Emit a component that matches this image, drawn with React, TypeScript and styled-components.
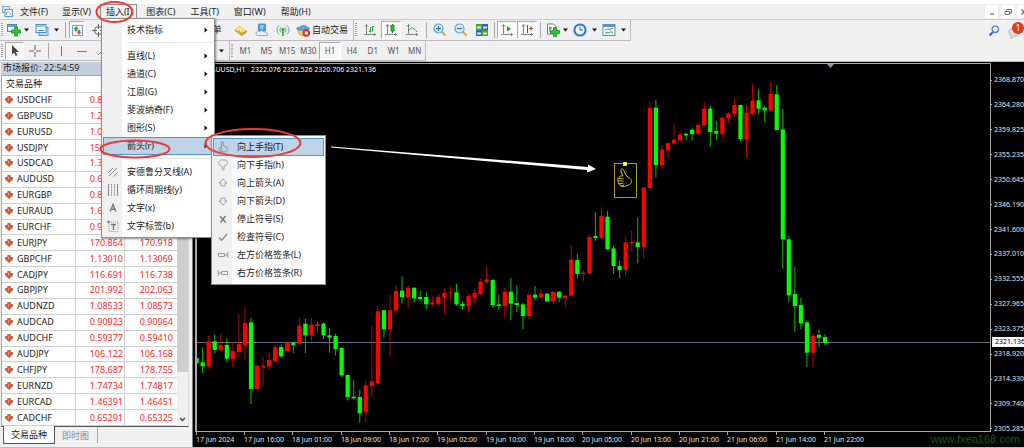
import React from "react";
import styled, { createGlobalStyle, css } from "styled-components";

const GlobalStyle = createGlobalStyle`
  * { box-sizing: border-box; }
  body {
    margin: 0;
    background: #f0f0f0;
    font-family: "Noto Sans", "Noto Sans CJK SC", sans-serif;
    font-size: 9px;
    line-height: 12px;
    color: #222;
  }
  button { font: inherit; color: inherit; border: 0; padding: 0; background: none; }
  svg { display: block; flex: none; }
`;

const Window = styled.div`
  position: relative;
  display: flex;
  flex-direction: column;
  height: 100vh;
  overflow: hidden;
  padding-top: 4px;
  background: linear-gradient(#fff 4px, #f0f0f0 4px);
`;

/* ---------- menu bar ---------- */

const MenuBar = styled.nav`
  display: flex;
  align-items: stretch;
  height: 16px;
  padding-left: 2px;
  border-bottom: 1px solid #c9c9c9;
`;

const MenuSlot = styled.div`
  position: relative;
  display: flex;
  &:nth-child(n + 6) {
    margin-left: 1px;
  }
`;

const MenuTitle = styled.button<{ $open?: boolean }>`
  padding: 1px 7px 0;
  white-space: nowrap;
  ${(p) =>
    p.$open &&
    css`
      padding: 0 4px 0 5px;
      margin: 0 2px;
      border: 1px solid #8c8c8c;
      border-width: 1px 1px 0;
    `}
`;

const AppIcon = styled.span`
  display: flex;
  align-items: center;
`;

const WindowButtons = styled.div`
  display: flex;
  gap: 3px;
  margin-left: auto;
  margin-right: -6px;
`;

const WindowButton = styled.button`
  display: flex;
  align-items: center;
  justify-content: center;
  width: 13px;
  height: 13px;
  margin-top: 1px;
  background: #fff;
`;

/* ---------- dropdowns ---------- */

const Dropdown = styled.div<{ $nested?: boolean }>`
  position: absolute;
  z-index: ${(p) => (p.$nested ? 3 : 2)};
  top: ${(p) => (p.$nested ? "-2px" : "14px")};
  left: ${(p) => (p.$nested ? "108px" : "3px")};
  width: ${(p) => (p.$nested ? 115 : 114)}px;
  padding: 2px 1px;
  border: 1px solid #8f8f8f;
  background: linear-gradient(to right, #f0f0f0 20px, #fff 20px);
  box-shadow: 1px 1px 2px rgba(0, 0, 0, 0.45);
`;

const Entry = styled.div`
  position: relative;
`;

const MenuEntry = styled.button<{ $active?: boolean }>`
  display: grid;
  grid-template-columns: 18px 1fr 8px;
  align-items: center;
  width: 100%;
  height: 18px;
  text-align: left;
  white-space: nowrap;
  border: 1px solid transparent;
  ${(p) =>
    p.$active &&
    css`
      background: #bfd3e6;
      border-color: #4a97d8;
    `}
`;

const EntryIcon = styled.span`
  display: flex;
  justify-content: center;
`;

const EntryLabel = styled.span`
  padding-left: 5px;
`;

const Separator = styled.hr`
  height: 1px;
  margin: 3px 0 4px 24px;
  border: 0;
  background: #e4e4e4;
`;

/* ---------- toolbars ---------- */

const ToolRow = styled.div<{ $main?: boolean }>`
  display: flex;
  align-items: stretch;
  height: ${(p) => (p.$main ? 21 : 20)}px;
`;

const ToolGroup = styled.div<{ $width: number }>`
  display: flex;
  align-items: center;
  flex: none;
  width: ${(p) => p.$width}px;
  padding-left: 4px;
  border: 1px solid #bdbdbd;
  border-width: 0 1px 1px 0;
  position: relative;
  &::before {
    content: "";
    flex: none;
    width: 2px;
    height: 14px;
    margin: 0 2px 0 -3px;
    background: repeating-linear-gradient(#a8a8a8 0 1px, transparent 1px 2px);
  }
`;

const Tool = styled.button<{ $w: number; $pressed?: boolean }>`
  display: flex;
  align-items: center;
  justify-content: center;
  gap: 2px;
  flex: none;
  width: ${(p) => p.$w}px;
  height: 18px;
  white-space: nowrap;
  ${(p) =>
    p.$pressed &&
    css`
      background: #f8f8f8;
      border: 1px solid #fff;
      border-top-color: #a9a9a9;
      border-left-color: #a9a9a9;
    `}
`;

const Rule = styled.span<{ $w: number }>`
  flex: none;
  width: ${(p) => p.$w}px;
  height: 16px;
  background: linear-gradient(#a9a9a9, #a9a9a9) center / 1px 100% no-repeat;
`;

const Timeframe = styled.button<{ $pressed?: boolean }>`
  flex: 1;
  height: 18px;
  font-size: 8px;
  color: #555;
  ${(p) =>
    p.$pressed &&
    css`
      background: #f8f8f8;
      border: 1px solid #fff;
      border-top-color: #a9a9a9;
      border-left-color: #a9a9a9;
    `}
`;

const RowEnd = styled.div`
  display: flex;
  align-items: center;
  gap: 7px;
  margin-left: auto;
`;

const Alert = styled.button`
  position: relative;
  width: 17px;
  height: 18px;
`;

const Badge = styled.span`
  position: absolute;
  top: 0;
  right: 0;
  width: 12px;
  height: 12px;
  border-radius: 6px;
  background: #e23a22;
  color: #fff;
  text-align: center;
`;

/* ---------- market watch ---------- */

const Workspace = styled.main`
  flex: 1;
  min-height: 0;
  display: grid;
  grid-template-columns: 193px 1fr;
  border-bottom: 1px solid #bdbdbd;
`;

const Watch = styled.section`
  display: flex;
  flex-direction: column;
  min-height: 0;
  padding: 1px 3px 0 1px;
  border-right: 1px solid #7d7d7d;
`;

const WatchTitle = styled.h2`
  margin: 0;
  height: 13px;
  padding-left: 2px;
  font-size: 9px;
  font-weight: 400;
  line-height: 12px;
  background: #c2cfdd;
`;

const WatchBody = styled.div`
  flex: 1;
  min-height: 0;
  display: flex;
  background: #fff;
  border: 1px solid #a6a6a6;
  border-right-color: #dcdcdc;
  border-bottom-color: #555;
`;

const Quotes = styled.table`
  flex: 1;
  height: 100%;
  border-collapse: collapse;
  table-layout: fixed;
  th,
  td {
    padding: 0;
    border-right: 1px solid #cfcfcf;
    border-bottom: 1px solid #cfcfcf;
    line-height: 12px;
  }
  th:last-child,
  td:last-child {
    border-right: 0;
  }
`;

const HeadCell = styled.th`
  height: 16px;
  text-align: left;
  font-weight: 400;
`;

const HeadText = styled.span`
  padding-left: 4px;
`;

const SymbolCell = styled.td`
  text-align: left;
`;

const SymbolName = styled.span`
  display: flex;
  align-items: center;
  gap: 4px;
  padding-left: 3px;
`;

const Price = styled.td<{ $last?: boolean }>`
  text-align: right;
  color: #ff2a2a;
  span {
    padding-right: ${(p) => (p.$last ? 4 : 1)}px;
  }
`;

const Scroll = styled.div`
  display: flex;
  flex-direction: column;
  width: 11px;
  background: #f0f0f0;
`;

const Thumb = styled.div`
  flex: 1;
  background: #cdcdcd;
`;

const ScrollDown = styled.div`
  display: flex;
  align-items: flex-end;
  justify-content: center;
  height: 54px;
  padding-bottom: 4px;
`;

const Tabs = styled.div`
  display: flex;
  height: 20px;
  padding-left: 2px;
`;

const Tab = styled.button<{ $active?: boolean }>`
  height: 17px;
  padding: 0 7px;
  color: #8b8b8b;
  ${(p) =>
    p.$active &&
    css`
      margin-top: -1px;
      height: 18px;
      background: #fff;
      color: #222;
      border: 1px solid #555;
      border-top: 0;
    `}
`;

/* ---------- chart ---------- */

const Chart = styled.section`
  display: grid;
  grid-template-columns: 1fr 33px;
  grid-template-rows: 1fr 15px;
  min-width: 0;
  padding: 1px 0 0 2px;
  background: #000;
  border-top: 1px solid #bcbcbc;
  color: #e4e4e4;
  font-size: 7px;
  line-height: 10px;
`;

const Plot = styled.div`
  position: relative;
  min-width: 0;
  min-height: 0;
  overflow: hidden;
  border: 1px solid #a8a8a8;
  border-left-width: 2px;
`;

const PlotSvg = styled.svg`
  position: absolute;
  inset: 0;
  width: 100%;
  height: 100%;
`;

const PlotTitle = styled.div`
  position: relative;
  padding: 1px 0 0 14px;
  white-space: pre;
  color: #fff;
`;

const PriceAxis = styled.div`
  position: relative;
  display: flex;
  flex-direction: column;
  justify-content: space-between;
  padding-top: 12px;
  margin-bottom: -2px;
`;

const PriceLabel = styled.span`
  display: flex;
  align-items: center;
  gap: 2px;
  &::before {
    content: "";
    width: 2px;
    height: 1px;
    background: #a8a8a8;
  }
`;

const PriceTag = styled.span`
  position: absolute;
  top: 274px;
  left: 1px;
  right: 0;
  padding-left: 3px;
  background: #fff;
  color: #000;
`;

const TimeAxis = styled.svg`
  width: 100%;
  height: 100%;
  overflow: visible;
  font-size: 7px;
`;

const Watermark = styled.a`
  position: absolute;
  right: 4px;
  bottom: 2px;
  font: 11px/14px "Liberation Sans", sans-serif;
  color: #0b5c0b;
  text-decoration: none;
`;

const Annotations = styled.svg`
  position: absolute;
  inset: 0;
  z-index: 5;
  width: 100%;
  height: 100%;
  pointer-events: none;
`;

/* ---------- data ---------- */

type Candle = [dir: "u" | "d", high: number, top: number, bottom: number, low: number];

/* Levels are counted in thirds of a pixel below each session's base. */
const sessions: { base: number; candles: Candle[] }[] = [
  {
    base: 678,
    candles: [
      ["d", 188, 204, 220, 250], ["d", 172, 217, 229, 248], ["u", 138, 154, 229, 236],
      ["d", 133, 154, 180, 190], ["u", 133, 165, 180, 185], ["d", 145, 165, 206, 217],
      ["u", 158, 183, 207, 231], ["u", 72, 162, 186, 201], ["u", 50, 99, 165, 207],
      ["d", 84, 97, 297, 342], ["u", 225, 227, 297, 297], ["u", 202, 227, 231, 288],
      ["u", 188, 210, 229, 240], ["u", 165, 172, 213, 213], ["d", 163, 171, 199, 204],
      ["u", 158, 158, 183, 183], ["d", 157, 158, 165, 190], ["u", 84, 107, 161, 161],
      ["d", 86, 101, 136, 190], ["u", 84, 104, 136, 152], ["u", 93, 102, 108, 125],
      ["d", 97, 101, 136, 147], ["d", 114, 136, 143, 188], ["d", 131, 138, 177, 197],
      ["d", 172, 174, 256, 261], ["d", 253, 255, 321, 331], ["d", 269, 320, 325, 329],
      ["d", 299, 321, 370, 399], ["u", 272, 286, 367, 396], ["u", 106, 274, 288, 320],
      ["u", 48, 64, 280, 281], ["d", 60, 61, 118, 143], ["u", 14, 61, 118, 200],
      ["u", -14, 3, 61, 70],
    ],
  },
  {
    base: 558,
    candles: [
      ["d", 79, 122, 141, 161], ["u", 107, 113, 141, 175], ["d", 113, 113, 145, 158],
      ["d", 122, 141, 147, 152], ["d", 127, 141, 163, 177], ["u", 138, 158, 163, 168],
      ["u", 133, 141, 161, 166], ["u", 115, 129, 143, 193], ["u", 111, 127, 130, 152],
      ["d", 101, 127, 163, 168], ["d", 154, 161, 168, 179], ["u", 132, 138, 168, 186],
      ["u", 118, 129, 143, 158], ["u", 86, 95, 132, 136], ["u", 50, 88, 96, 102],
      ["d", 87, 90, 165, 172], ["d", 134, 163, 168, 177], ["u", 113, 125, 168, 202],
      ["d", 84, 125, 161, 211], ["d", 107, 159, 165, 186], ["d", 159, 163, 198, 238],
      ["u", 132, 134, 198, 210], ["d", 108, 134, 143, 151], ["u", 116, 131, 143, 145],
      ["d", 129, 131, 154, 156], ["u", 122, 125, 154, 163], ["d", 123, 125, 143, 156],
      ["u", 134, 137, 145, 172], ["u", -15, 28, 137, 138], ["d", 12, 30, 72, 86],
      ["u", 60, 68, 72, 95], ["u", -48, -39, 70, 72],
    ],
  },
  {
    base: 18,
    candles: [
      ["d", 426, 498, 504, 513], ["u", 413, 438, 504, 507], ["d", 423, 440, 538, 538],
      ["d", 528, 535, 588, 612], ["d", 572, 588, 600, 624], ["u", 497, 517, 600, 618],
      ["u", 483, 516, 519, 546], ["d", 442, 517, 531, 580], ["u", 351, 353, 531, 565],
      ["u", 96, 114, 354, 362], ["d", 89, 113, 285, 322], ["u", 225, 239, 285, 297],
      ["u", 218, 219, 241, 267], ["u", 161, 209, 221, 223], ["u", 182, 193, 211, 218],
      ["d", 190, 191, 196, 211], ["d", 173, 179, 192, 211], ["u", 158, 165, 191, 197],
      ["u", 98, 116, 166, 167], ["d", 108, 116, 186, 230], ["d", 152, 183, 191, 211],
      ["u", 143, 143, 191, 202], ["u", 128, 130, 145, 161], ["u", 86, 105, 132, 143],
      ["d", 104, 105, 207, 214], ["u", 105, 128, 209, 262], ["u", 43, 92, 132, 137],
      ["d", 57, 91, 116, 132], ["d", 109, 113, 121, 156], ["u", 34, 72, 121, 123],
      ["d", 45, 73, 180, 180], ["d", 116, 178, 508, 596],
    ],
  },
  {
    base: 558,
    candles: [
      ["d", -42, -32, 136, 156], ["d", 52, 132, 168, 245], ["d", 143, 165, 220, 238],
      ["d", 211, 217, 308, 350], ["u", 249, 258, 308, 351], ["d", 240, 255, 263, 290],
      ["d", 252, 261, 279, 286],
    ],
  },
];

const PITCH = 6.043;
const candleX = (i: number) => i * PITCH - 0.4;

const candles = sessions.flatMap(({ base, candles }) =>
  candles.map(([dir, ...levels]) => ({ dir, y: levels.map((l) => (base + l) / 3) }))
);

const times = [
  "17 Jun 2024", "17 Jun 16:00", "18 Jun 01:00", "18 Jun 09:00", "18 Jun 17:00",
  "19 Jun 02:00", "19 Jun 10:00", "19 Jun 18:00", "20 Jun 05:00", "20 Jun 13:00",
  "20 Jun 21:00", "21 Jun 06:00", "21 Jun 14:00", "21 Jun 22:00",
];

const prices = [
  "2368.870", "2364.280", "2359.825", "2355.235", "2350.645", "2346.190", "2341.600",
  "2337.010", "2332.555", "2327.965", "2323.375", "2318.920", "2314.330", "2309.740",
  "2305.285",
];

/* Asks are blank for the pairs that lie behind the open menu. */
const quotes = [
  ["USDCHF", "0.89352", ""], ["GBPUSD", "1.26438", ""],
  ["EURUSD", "1.06915", ""], ["USDJPY", "159.788", ""],
  ["USDCAD", "1.36981", ""], ["AUDUSD", "0.66398", ""],
  ["EURGBP", "0.84552", ""], ["EURAUD", "1.60985", ""],
  ["EURCHF", "0.95540", ""], ["EURJPY", "170.864", "170.918"],
  ["GBPCHF", "1.13010", "1.13069"], ["CADJPY", "116.691", "116.738"],
  ["GBPJPY", "201.992", "202.063"], ["AUDNZD", "1.08533", "1.08573"],
  ["AUDCAD", "0.90923", "0.90964"], ["AUDCHF", "0.59377", "0.59410"],
  ["AUDJPY", "106.122", "106.168"], ["CHFJPY", "178.687", "178.755"],
  ["EURNZD", "1.74734", "1.74817"], ["EURCAD", "1.46391", "1.46451"],
  ["CADCHF", "0.65291", "0.65325"],
];

/* ---------- icons ---------- */

const Icon = ({ w = 14, h = 14, children }: { w?: number; h?: number; children: React.ReactNode }) => (
  <svg width={w} height={h} viewBox={`0 0 ${w} ${h}`} fill="none" aria-hidden="true">
    {children}
  </svg>
);

const Caret = () => (
  <Icon w={5} h={4}><path d="M0 .5h5L2.500 3.500z" fill="#111" /></Icon>
);

const SubArrow = () => (
  <Icon w={4} h={6}><path d="M.5.5v5L3.500 3z" fill="#111" /></Icon>
);

const Plus = ({ x, y }: { x: number; y: number }) => (
  <path
    transform={`translate(${x} ${y})`}
    d="M3 0h3v3h3v3H6v3H3V6H0V3h3z"
    fill="#2dc92d"
    stroke="#0d8a18"
    strokeWidth=".7"
  />
);

const AppLogo = () => (
  <Icon w={11} h={11}>
    <rect x=".5" y=".5" width="7" height="6" fill="#dcebf8" stroke="#7fa9d2" />
    <rect x="3" y="3.500" width="7.500" height="7" fill="#fff" stroke="#5f93c8" />
    <path d="M4.500 9V6.500l2-1 2 2V9" stroke="#5f93c8" strokeWidth=".8" />
  </Icon>
);

const NewChartIcon = () => (
  <Icon>
    <rect x=".5" y="1.500" width="9" height="7" fill="#eaf3fb" stroke="#4c86bd" />
    <path d="M1 3h8" stroke="#4c86bd" strokeWidth="1.500" />
    <Plus x={4.5} y={4} />
  </Icon>
);

const ProfilesIcon = () => (
  <Icon>
    <rect x="4" y="4.500" width="9" height="8" fill="#c7dcf0" stroke="#5e9bd2" />
    <rect x="1" y="1.500" width="10" height="8" fill="#f4f9fe" stroke="#4a8fce" />
    <path d="M1.500 3h9M3 7.500h6" stroke="#4a8fce" />
  </Icon>
);

const MarketIcon = () => (
  <Icon w={11} h={11}>
    <rect x=".5" y=".5" width="10" height="10" fill="#f3f9fe" stroke="#6fa8dc" />
    <path d="m4 1.500 2 2-1 .3V6H3V3.800L2 3.500z" fill="#27a52c" stroke="#27a52c" strokeWidth=".5" />
    <path d="m7 9.500 2-2-1-.3V5H6v2.200l-1 .3z" fill="#d8572a" stroke="#d8572a" strokeWidth=".5" />
  </Icon>
);

const TargetIcon = () => (
  <Icon w={13} h={13}>
    <circle cx="6.500" cy="6.500" r="4" stroke="#666" />
    <path d="M6.500 0v5M6.500 8v5M0 6.500h5M8 6.500h5" stroke="#666" />
  </Icon>
);

const GoldIcon = () => (
  <Icon>
    <path d="M1 7.500 5.500 3 13 8.500 8 12.500z" fill="#e8b63a" stroke="#a9761a" strokeWidth=".8" />
    <path d="M1.500 7 5.500 2.500 12.500 7.500 8 10.500z" fill="#fbe08a" />
    <path d="M4 7.500 8 10.500l4-2.500" stroke="#b8862a" strokeWidth=".8" />
  </Icon>
);

const UserIcon = () => (
  <Icon>
    <rect x="3.500" y="1" width="7" height="7" rx="1" fill="#4da3e8" stroke="#2a78bd" strokeWidth=".8" />
    <path d="M5 3h4M5 5h3" stroke="#d9eefc" />
    <path d="M2.500 12.500a2.500 2.500 0 0 1 0-4.500c1 0 1.500 0 2 .5 1.500-1.500 4-1 4.500.5 2.500-.5 4 1 3.500 3.500z" fill="#e8f2fb" stroke="#6a9ac6" strokeWidth=".8" />
  </Icon>
);

const SignalIcon = () => (
  <Icon>
    <circle cx="7" cy="7" r="6" fill="#e4efe6" />
    <path d="M3 2.500a6 6 0 0 0 0 9M11 2.500a6 6 0 0 1 0 9" stroke="#6f9fd0" />
    <path d="M5 4.500a3.500 3.500 0 0 0 0 5M9 4.500a3.500 3.500 0 0 1 0 5" stroke="#5db765" />
    <circle cx="7" cy="6.500" r="1.500" fill="#2ca13a" />
    <path d="M7 7v6" stroke="#2ca13a" strokeWidth="1.500" />
  </Icon>
);

const AutoIcon = () => (
  <Icon>
    <path d="M1.500 6h11l-1.500 5-4 2-4-2z" fill="#f3cf5b" stroke="#b58a22" strokeWidth=".7" />
    <path d="M3 5.500 5 2l5-.500 1.500 3.500z" fill="#7cc0ea" />
    <ellipse cx="7" cy="5.500" rx="6.500" ry="1.800" fill="#5aa9dd" stroke="#3179ad" strokeWidth=".6" />
    <circle cx="10.300" cy="10" r="3.700" fill="#dd2c1f" />
    <rect x="8.800" y="8.500" width="3" height="3" fill="#fff" />
  </Icon>
);

const Axes = ({ children }: { children: React.ReactNode }) => (
  <Icon w={12} h={12}>
    <path d="M2.500 1v9.500H12M1 2.500l1.500-2 1.500 2M10 9l1.500 1.500L10 12M0 10.500h2" stroke="#777" strokeWidth=".9" />
    {children}
  </Icon>
);

const BarsIcon = () => (
  <Axes><path d="M6.500 8.500V3M8.500 2v5.500M6.500 7.500H5M8.500 2.500H10" stroke="#1f9e2b" /></Axes>
);
const CandleIcon = () => (
  <Axes>
    <path d="M7.500 0v9" stroke="#12801d" />
    <rect x="6" y="1.500" width="3" height="5.500" fill="#23c933" stroke="#12801d" strokeWidth=".8" />
  </Axes>
);
const LineIcon = () => (
  <Axes><path d="M2.500 7C5 2.500 8 3.500 11 8" stroke="#1f9e2b" /></Axes>
);
const ScrollIcon = () => (
  <Axes><path d="M6 2v5.500l4-2.700z" fill="#18a324" /></Axes>
);
const ShiftIcon = () => (
  <Axes>
    <path d="M6.500 1v8" stroke="#555" />
    <path d="M8 4.500h4M10 2.500v4" stroke="#c9481c" strokeWidth="1.200" />
  </Axes>
);

const ZoomIcon = ({ plus }: { plus?: boolean }) => (
  <Icon>
    <path d="m8.500 8.500 4 4" stroke="#d9ae4c" strokeWidth="2.400" />
    <circle cx="5.500" cy="5.500" r="4.500" fill="#d4ecfb" stroke="#5a9fd4" strokeWidth="1.200" />
    <path d={plus ? "M3 5.500h5M5.500 3v5" : "M3 5.500h5"} stroke="#2672b0" strokeWidth="1.200" />
  </Icon>
);

const TileIcon = () => (
  <Icon>
    <rect x="1" y="1" width="6" height="6" fill="#4fa82c" />
    <rect x="7" y="1" width="6" height="6" fill="#2f66c4" />
    <rect x="1" y="7" width="6" height="6" fill="#2f66c4" />
    <rect x="7" y="7" width="6" height="6" fill="#4fa82c" />
    <path d="M2 4.500h4M8 4.500h4M2 10.500h4M8 10.500h4" stroke="#dcecdc" strokeWidth="2" />
  </Icon>
);

const IndicatorIcon = () => (
  <Icon>
    <path d="M1.500 1h6l2.500 2.500V11H1.500z" fill="#fff" stroke="#777" />
    <path d="M4 9V3.500M3 5h3" stroke="#555" />
    <Plus x={4.5} y={4.5} />
  </Icon>
);

const ClockIcon = () => (
  <Icon>
    <circle cx="7" cy="7" r="5.600" fill="#e8f2fb" stroke="#2f7acb" strokeWidth="2" />
    <path d="M7 3.500V7h3" stroke="#555" />
  </Icon>
);

const TemplateIcon = () => (
  <Icon>
    <rect x="1" y="1.500" width="12" height="11" fill="#f4f9fd" stroke="#4f8fc7" />
    <path d="M1 3h12" stroke="#4f8fc7" strokeWidth="1.800" />
    <path d="m3 7 2.500-1L8 6.500 11 5" stroke="#c75b2f" />
    <path d="m3 10.500 2-1.500 2 1 2-1.500 2 1.500" stroke="#3f9e4b" />
  </Icon>
);

const PointerIcon = () => (
  <Icon w={8} h={12}>
    <path d="M1 0v9.500l2.200-2 1.500 3.500 1.600-.700L4.800 7H8z" fill="#444" />
  </Icon>
);

const CrossIcon = () => (
  <Icon w={12} h={12}><path d="M6 0v5M6 7v5M0 6h5M7 6h5" stroke="#666" /></Icon>
);

const SearchIcon = () => (
  <Icon w={12} h={12}>
    <path d="M5 7 1.500 10.500" stroke="#2f5fc4" strokeWidth="2" />
    <circle cx="7.300" cy="4.300" r="3.200" fill="#f3f7fd" stroke="#4a78d4" strokeWidth="1.300" />
  </Icon>
);

const BubbleIcon = () => (
  <Icon w={17} h={18}>
    <path d="M2 10c0-3 3-4 6-3.500s5 2 4.500 4.500-4 3.500-6 3L4 16.500 4 13.500C2.500 12.500 2 11.500 2 10z" fill="#e0e0e0" stroke="#a8a8a8" strokeWidth=".8" />
  </Icon>
);

const DownMark = () => (
  <Icon w={8} h={8}>
    <path d="M2.700.5h2.600v2h2.200v1.800L4 7.600.5 4.300V2.500h2.200z" fill="#dd5a30" stroke="#a2482a" strokeWidth=".7" />
    <path d="M3.500 1.500v3" stroke="#f5a684" strokeWidth=".8" />
  </Icon>
);

const ThumbUpIcon = () => (
  <Icon w={12} h={12}>
    <path
      d="M5.500.8c.9 0 1 .8.9 1.600L6.200 4.500 9.500 6c.8.400.9 1 .9 1.800 0 1.400-.8 2.700-2.100 3H5C3.500 10.800 2.500 10 2.200 8.800S2 7 2.800 6.500l1.700-.8-.2-3.500C4.300 1.300 4.800.8 5.500.8zM3 7.200h2.500M3 9h2.500"
      stroke="#808080"
      strokeWidth=".8"
    />
  </Icon>
);
const ThumbDownIcon = () => (
  <Icon w={12} h={12}>
    <path d="M4 1h4c1.500 0 2.500 1.300 2.500 2.800 0 1.300-.8 2-1.800 2.500L7 7v3.200c0 1.300-1.600 1.300-1.700 0L5 7.300 2.500 6C1.300 5 1.500 1.800 4 1z" stroke="#999" strokeWidth=".9" />
  </Icon>
);
const UpIcon = () => (
  <Icon w={12} h={12}><path d="m6 2 4 4H8v3H4V6H2z" stroke="#999" strokeWidth=".9" /></Icon>
);
const DownIcon = () => (
  <Icon w={12} h={12}><path d="m6 10 4-4H8V3H4v3H2z" stroke="#999" strokeWidth=".9" /></Icon>
);
const StopIcon = () => (
  <Icon w={12} h={12}><path d="m3 3.500 6 6M8.500 3 3.500 9.500" stroke="#777" strokeWidth="1.400" /></Icon>
);
const CheckIcon = () => (
  <Icon w={12} h={12}><path d="m2 6.500 2.500 3L10 3" stroke="#888" strokeWidth="1.200" /></Icon>
);
const LeftTagIcon = () => (
  <Icon w={12} h={12}><path d="M1.500 4.500h6v3h-6zM7.500 6H11M10.800 3v6" stroke="#999" /></Icon>
);
const RightTagIcon = () => (
  <Icon w={12} h={12}><path d="M4.500 4.500h6v3h-6zM1 6h3.500M1.200 3v6" stroke="#999" /></Icon>
);
const ForkIcon = () => (
  <Icon w={12} h={12}><path d="m1 7 5-5M2 10l8-8M6.500 10.500l4-4" stroke="#888" /></Icon>
);
const CycleIcon = () => (
  <Icon w={12} h={12}>
    <path d="M1.500 0v12M10.500 0v12" stroke="#888" />
    <path d="M4.500 0v12M7.500 0v12" stroke="#888" strokeDasharray="1.500 1" />
  </Icon>
);
const LetterIcon = () => (
  <Icon w={12} h={12}><path d="M3.200 9.500 6 2.500l2.800 7M4.200 7.200h3.600" stroke="#777" strokeWidth="1.400" /></Icon>
);
const LabelIcon = () => (
  <Icon w={12} h={12}>
    <rect x="2" y="2" width="9" height="9.500" stroke="#999" strokeDasharray="1 1" />
    <path d="M4 4.500h5M6.500 4.500V10" stroke="#777" strokeWidth="1.400" />
    <path d="M0 2h3M1.500.5v3" stroke="#777" />
  </Icon>
);

/* ---------- parts ---------- */

interface Item {
  label: string;
  icon?: React.ReactNode;
  sub?: boolean;
}

const arrowItems: Item[] = [
  { label: "向上手指(T)", icon: <ThumbUpIcon /> },
  { label: "向下手指(h)", icon: <ThumbDownIcon /> },
  { label: "向上箭头(A)", icon: <UpIcon /> },
  { label: "向下箭头(D)", icon: <DownIcon /> },
  { label: "停止符号(S)", icon: <StopIcon /> },
  { label: "检查符号(C)", icon: <CheckIcon /> },
  { label: "左方价格签条(L)", icon: <LeftTagIcon /> },
  { label: "右方价格签条(R)", icon: <RightTagIcon /> },
];

const insertItems: (Item | null)[] = [
  { label: "技术指标", sub: true },
  null,
  { label: "直线(L)", sub: true },
  { label: "通道(C)", sub: true },
  { label: "江恩(G)", sub: true },
  { label: "斐波纳奇(F)", sub: true },
  { label: "图形(S)", sub: true },
  { label: "箭头(r)", sub: true },
  null,
  { label: "安德鲁分叉线(A)", icon: <ForkIcon /> },
  { label: "循环周期线(y)", icon: <CycleIcon /> },
  { label: "文字(x)", icon: <LetterIcon /> },
  { label: "文字标签(b)", icon: <LabelIcon /> },
];

const MenuItems = ({ items, active }: { items: (Item | null)[]; active: string }) => (
  <>
    {items.map((item, i) =>
      item ? (
        <Entry key={item.label}>
          <MenuEntry $active={item.label === active}>
            <EntryIcon>{item.icon}</EntryIcon>
            <EntryLabel>{item.label}</EntryLabel>
            {item.sub && <SubArrow />}
          </MenuEntry>
          {item.label === "箭头(r)" && (
            <Dropdown $nested>
              <MenuItems items={arrowItems} active="向上手指(T)" />
            </Dropdown>
          )}
        </Entry>
      ) : (
        <Separator key={i} />
      )
    )}
  </>
);

const menus = ["文件(F)", "显示(V)", "插入(I)", "图表(C)", "工具(T)", "窗口(W)", "帮助(H)"];
const timeframes = ["M1", "M5", "M15", "M30", "H1", "H4", "D1", "W1", "MN"];

const Candles = () => (
  <>
    {candles.map(({ dir, y: [high, top, bottom, low] }, i) => (
      <g key={i} fill={dir === "u" ? "#ff0000" : "#00ff00"}>
        <rect x={candleX(i) - 0.5} y={high} width="1" height={low - high} opacity=".75" />
        <rect x={candleX(i) - 2.1} y={top} width="4.200" height={Math.max(bottom - top, 1)} />
      </g>
    ))}
  </>
);

export default function App() {
  return (
    <Window>
      <GlobalStyle />
      <MenuBar>
        <AppIcon><AppLogo /></AppIcon>
        {menus.map((name) => (
          <MenuSlot key={name}>
            <MenuTitle $open={name === "插入(I)"}>{name}</MenuTitle>
            {name === "插入(I)" && (
              <Dropdown>
                <MenuItems items={insertItems} active="箭头(r)" />
              </Dropdown>
            )}
          </MenuSlot>
        ))}
        <WindowButtons>
          <WindowButton aria-label="最小化">
            <Icon w={8} h={8}><path d="M2 6h4" stroke="#5a6f86" strokeWidth="1.200" /></Icon>
          </WindowButton>
          <WindowButton aria-label="还原">
            <Icon w={8} h={8}><path d="M2.500 2.500v-1h5v3.500H6M1 3.500h4.500v3H1z" stroke="#5a6f86" /></Icon>
          </WindowButton>
          <WindowButton aria-label="关闭">
            <Icon w={8} h={8}><path d="m1.500 1.500 5 5m0-5-5 5" stroke="#5a6f86" strokeWidth="1.300" /></Icon>
          </WindowButton>
        </WindowButtons>
      </MenuBar>

      <ToolRow $main>
        <ToolGroup $width={354}>
          <Tool $w={17} aria-label="新图表"><NewChartIcon /></Tool>
          <Tool $w={9} aria-label="图表列表"><Caret /></Tool>
          <Tool $w={21} aria-label="配置文件"><ProfilesIcon /></Tool>
          <Tool $w={9} aria-label="配置列表"><Caret /></Tool>
          <Rule $w={8} />
          <Tool $w={16} $pressed aria-label="市场报价"><MarketIcon /></Tool>
          <Tool $w={27} aria-label="数据窗口"><TargetIcon /></Tool>
          <Rule $w={74} />
          <Tool $w={44}>新订单</Tool>
          <Tool $w={21} aria-label="编辑器"><GoldIcon /></Tool>
          <Tool $w={21} aria-label="社区"><UserIcon /></Tool>
          <Tool $w={21} aria-label="信号"><SignalIcon /></Tool>
          <Tool $w={58}><AutoIcon />自动交易</Tool>
        </ToolGroup>
        <ToolGroup $width={277}>
          <Tool $w={22} aria-label="柱状图"><BarsIcon /></Tool>
          <Tool $w={20} $pressed aria-label="阴阳烛"><CandleIcon /></Tool>
          <Tool $w={22} aria-label="折线图"><LineIcon /></Tool>
          <Rule $w={6} />
          <Tool $w={21} aria-label="放大"><ZoomIcon plus /></Tool>
          <Tool $w={21} aria-label="缩小"><ZoomIcon /></Tool>
          <Tool $w={21} aria-label="平铺"><TileIcon /></Tool>
          <Rule $w={5} />
          <Tool $w={20} $pressed aria-label="自动滚动"><ScrollIcon /></Tool>
          <Tool $w={20} $pressed aria-label="图表平移"><ShiftIcon /></Tool>
          <Rule $w={7} />
          <Tool $w={17} aria-label="指标"><IndicatorIcon /></Tool>
          <Tool $w={9} aria-label="指标列表"><Caret /></Tool>
          <Tool $w={20} aria-label="周期"><ClockIcon /></Tool>
          <Tool $w={9} aria-label="周期列表"><Caret /></Tool>
          <Tool $w={20} aria-label="模板"><TemplateIcon /></Tool>
          <Tool $w={9} aria-label="模板列表"><Caret /></Tool>
        </ToolGroup>
        <RowEnd>
          <Tool $w={12} aria-label="搜索"><SearchIcon /></Tool>
          <Alert aria-label="消息"><BubbleIcon /><Badge>1</Badge></Alert>
        </RowEnd>
      </ToolRow>

      <ToolRow>
        <ToolGroup $width={230}>
          <Tool $w={19} $pressed aria-label="光标"><PointerIcon /></Tool>
          <Tool $w={22} aria-label="十字线"><CrossIcon /></Tool>
          <Rule $w={4} />
          <Tool $w={21} aria-label="垂直线">
            <Icon w={10} h={10}><path d="M5.500 0v10" stroke="#777" /></Icon>
          </Tool>
          <Tool $w={21} aria-label="水平线">
            <Icon w={10} h={10}><path d="M0 5.500h10" stroke="#777" /></Icon>
          </Tool>
          <Tool $w={21} aria-label="趋势线">
            <Icon w={10} h={10}><path d="m0 9 9-9" stroke="#777" /></Icon>
          </Tool>
          <Rule $w={104} />
          <Tool $w={9} aria-label="图形列表"><Caret /></Tool>
        </ToolGroup>
        <ToolGroup $width={196}>
          {timeframes.map((tf) => (
            <Timeframe key={tf} $pressed={tf === "H1"}>{tf}</Timeframe>
          ))}
        </ToolGroup>
      </ToolRow>

      <Workspace>
        <Watch>
          <WatchTitle>市场报价: 22:54:59</WatchTitle>
          <WatchBody>
            <Quotes>
              <colgroup>
                <col style={{ width: "42%" }} />
                <col style={{ width: "28%" }} />
                <col style={{ width: "30%" }} />
              </colgroup>
              <thead>
                <tr>
                  <HeadCell><HeadText>交易品种</HeadText></HeadCell>
                  <HeadCell />
                  <HeadCell />
                </tr>
              </thead>
              <tbody>
                {quotes.map(([symbol, bid, ask]) => (
                  <tr key={symbol}>
                    <SymbolCell>
                      <SymbolName><DownMark />{symbol}</SymbolName>
                    </SymbolCell>
                    <Price><span>{bid}</span></Price>
                    <Price $last><span>{ask}</span></Price>
                  </tr>
                ))}
              </tbody>
            </Quotes>
            <Scroll>
              <Thumb />
              <ScrollDown>
                <Icon w={7} h={5}><path d="m1 1 2.500 2.500L6 1" stroke="#444" strokeWidth="1.300" /></Icon>
              </ScrollDown>
            </Scroll>
          </WatchBody>
          <Tabs>
            <Tab $active>交易品种</Tab>
            <Tab>即时图</Tab>
            <Rule $w={2} />
          </Tabs>
        </Watch>

        <Chart>
          <Plot>
            <PlotSvg>
              <path d="M0 278.500H2000" stroke="#5f6f7d" />
              <path d="M630 0h7l-3.500 4z" fill="#8797aa" />
              <Candles />
              <g stroke="#a89a10" fill="none">
                <rect x="417.500" y="99.500" width="22" height="34" />
                <path d="M424.500 105c1.200-.5 2 .5 2.600 2l2 4.500 3.500 2.500c1.500 1 1.800 2 1.800 3.500 0 2-1.500 3-3 3.500l-3.500 1.300c-3 .5-5-.3-6-2.300-1.300-2-1.500-5-.5-6.500.8-1.300 2.500-1.700 4.500-1.500l-2-5c-.3-1-.1-1.700.6-2zM421.500 114.500c2-.2 3.500 0 5 .7M421 117c2-.5 4 0 5.500.5M421.800 119.500c1.500-.3 3 0 4.700.3M423.500 121.800l3.500-.2" stroke="#cfc016" />
                <rect x="426.500" y="98.500" width="3" height="3" fill="#fffbd0" stroke="#e8dc3a" />
              </g>
            </PlotSvg>
            <PlotTitle>{"AUUSD,H1   2322.076 2322.526 2320.706 2321.136"}</PlotTitle>
          </Plot>
          <PriceAxis>
            {prices.map((p) => (
              <PriceLabel key={p}>{p}</PriceLabel>
            ))}
            <PriceTag>2321.136</PriceTag>
          </PriceAxis>
          <TimeAxis>
            {times.map((t, i) => (
              <g key={t} transform={`translate(${Math.round(candleX(i * 8)) + 1} 0)`}>
                <path d="M.5 0v3" stroke="#a8a8a8" />
                <text x="0" y="10" fill="#e4e4e4">{t}</text>
              </g>
            ))}
          </TimeAxis>
        </Chart>
      </Workspace>

      <Watermark href="#">www.fxea168.com</Watermark>

      <Annotations aria-hidden="true">
        <g fill="none" stroke="#ee3a34" strokeWidth="2">
          <ellipse cx="114.500" cy="12" rx="18" ry="10" />
          <ellipse cx="135" cy="149" rx="34.500" ry="8.500" />
          <ellipse cx="253" cy="143" rx="47.500" ry="14" />
        </g>
        <path d="M331 146.500 588 167v-2.500l8 4.500-9 3.500v-2.500L331 147.500z" fill="#fff" />
      </Annotations>
    </Window>
  );
}
